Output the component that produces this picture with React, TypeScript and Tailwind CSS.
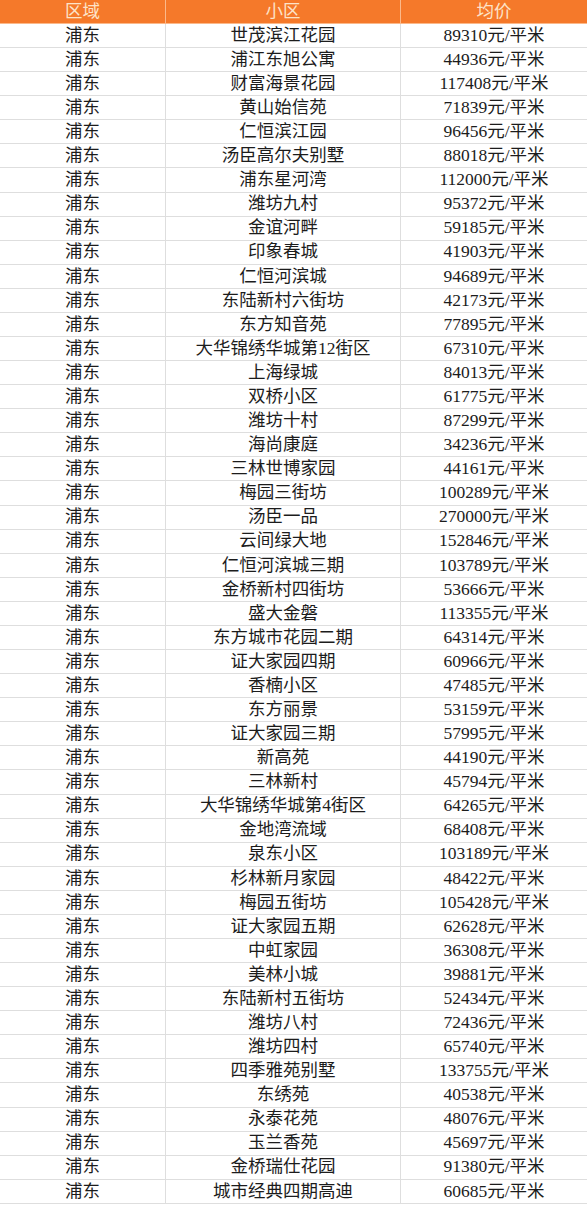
const rows: [string, string][] = [
  ["世茂滨江花园", "89310"],
  ["浦江东旭公寓", "44936"],
  ["财富海景花园", "117408"],
  ["黄山始信苑", "71839"],
  ["仁恒滨江园", "96456"],
  ["汤臣高尔夫别墅", "88018"],
  ["浦东星河湾", "112000"],
  ["潍坊九村", "95372"],
  ["金谊河畔", "59185"],
  ["印象春城", "41903"],
  ["仁恒河滨城", "94689"],
  ["东陆新村六街坊", "42173"],
  ["东方知音苑", "77895"],
  ["大华锦绣华城第12街区", "67310"],
  ["上海绿城", "84013"],
  ["双桥小区", "61775"],
  ["潍坊十村", "87299"],
  ["海尚康庭", "34236"],
  ["三林世博家园", "44161"],
  ["梅园三街坊", "100289"],
  ["汤臣一品", "270000"],
  ["云间绿大地", "152846"],
  ["仁恒河滨城三期", "103789"],
  ["金桥新村四街坊", "53666"],
  ["盛大金磐", "113355"],
  ["东方城市花园二期", "64314"],
  ["证大家园四期", "60966"],
  ["香楠小区", "47485"],
  ["东方丽景", "53159"],
  ["证大家园三期", "57995"],
  ["新高苑", "44190"],
  ["三林新村", "45794"],
  ["大华锦绣华城第4街区", "64265"],
  ["金地湾流域", "68408"],
  ["泉东小区", "103189"],
  ["杉林新月家园", "48422"],
  ["梅园五街坊", "105428"],
  ["证大家园五期", "62628"],
  ["中虹家园", "36308"],
  ["美林小城", "39881"],
  ["东陆新村五街坊", "52434"],
  ["潍坊八村", "72436"],
  ["潍坊四村", "65740"],
  ["四季雅苑别墅", "133755"],
  ["东绣苑", "40538"],
  ["永泰花苑", "48076"],
  ["玉兰香苑", "45697"],
  ["金桥瑞仕花园", "91380"],
  ["城市经典四期高迪", "60685"],
];

const font = "font-['Liberation_Serif','Noto_Sans_CJK_SC',serif]";

export default function App() {
  return (
    <div className={`w-[587px] bg-white ${font} text-[17.5px] text-[#1c1c1c]`}>
      {/* header */}
      <div className="grid grid-cols-[166px_235px_1fr] h-[24px] bg-[#f5792a] text-[#fde3c8] border-b border-[#fbb98a] leading-none">
        <div className="flex items-center justify-center border-r border-[#fbb98a]">区域</div>
        <div className="flex items-center justify-center border-r border-[#fbb98a]">小区</div>
        <div className="flex items-center justify-center">均价</div>
      </div>
      {rows.map(([name, price], i) => (
        <div key={i} className="grid grid-cols-[166px_235px_1fr] h-[24.08px] border-b border-[#dedede] leading-none">
          <div className="flex items-center justify-center border-r border-[#dedede]">浦东</div>
          <div className="flex items-center justify-center border-r border-[#dedede]">{name}</div>
          <div className="flex items-center justify-center">{price}元/平米</div>
        </div>
      ))}
    </div>
  );
}
